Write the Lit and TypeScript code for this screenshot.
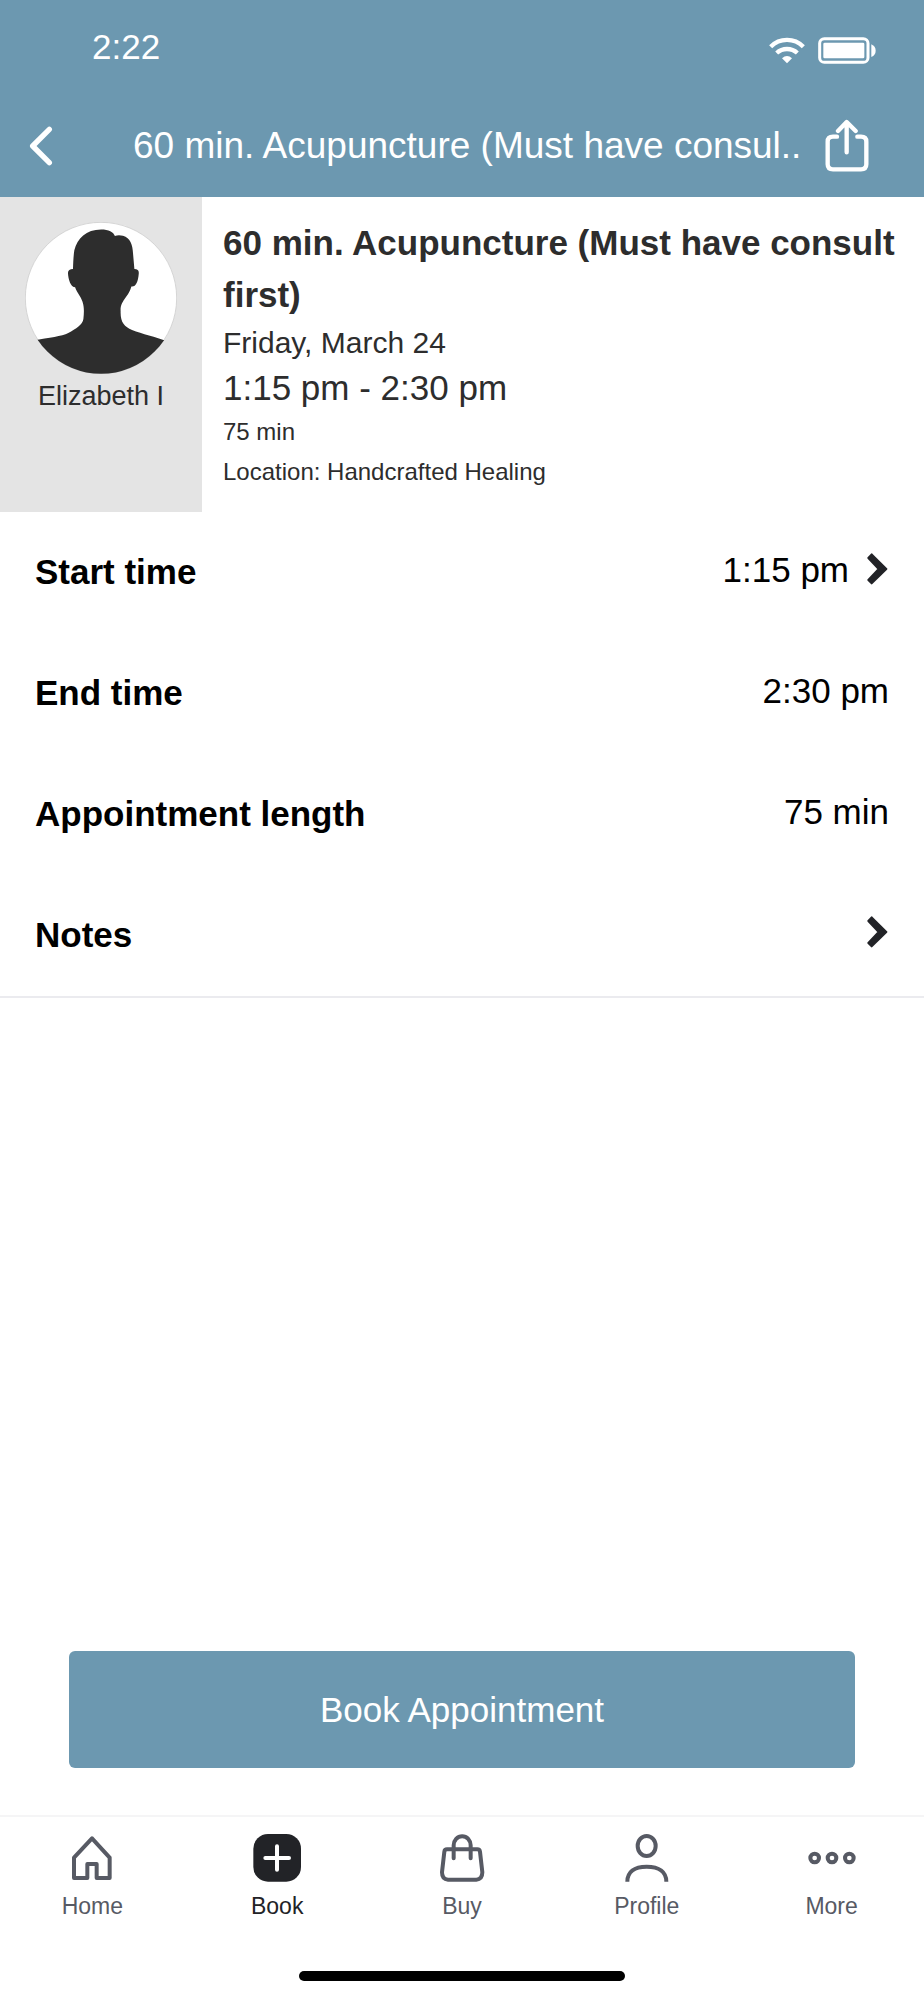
import { LitElement, html, css, svg, nothing, type TemplateResult } from "lit";
import { customElement } from "lit/decorators.js";
import { classMap } from "lit/directives/class-map.js";

interface Row {
  label: string;
  value?: string;
  opens?: boolean;
}

interface Tab {
  label: string;
  viewBox: string;
  icon: TemplateResult;
  active?: boolean;
}

const rows: Row[] = [
  { label: "Start time", value: "1:15 pm", opens: true },
  { label: "End time", value: "2:30 pm" },
  { label: "Appointment length", value: "75 min" },
  { label: "Notes", opens: true },
];

const tabs: Tab[] = [
  {
    label: "Home",
    viewBox: "205 100 144 144",
    icon: svg`<path class="line" d="M277 113 L330 171 V232 H291 V190 H263 V232 H223 V171 Z"/>`,
  },
  {
    label: "Book",
    viewBox: "759 100 144 144",
    active: true,
    icon: svg`<rect class="tile" x="760" y="100" width="143" height="143" rx="44"/>
      <path class="plus" d="M831 137 V207 M796 172 H867"/>`,
  },
  {
    label: "Buy",
    viewBox: "113 100 144 144",
    icon: svg`<path class="line" d="M140 146 H231 Q238 146 239 153 L246 215 Q246 236 228 237 H143 Q125 236 125 215 L132 153 Q133 146 140 146 Z"/>
      <path class="line" d="M160 173 V134 A25 27 0 0 1 211 134 V173"/>`,
  },
  {
    label: "Profile",
    viewBox: "667 100 144 144",
    icon: svg`<ellipse class="line" cx="738" cy="136" rx="27" ry="30"/>
      <path class="line butt" d="M680 243 C680 215 700 198 738 198 S797 215 797 243"/>`,
  },
  {
    label: "More",
    viewBox: "1220 100 144 144",
    icon: svg`<circle class="line" cx="1240" cy="172" r="13"/>
      <circle class="line" cx="1292" cy="172" r="13"/>
      <circle class="line" cx="1344" cy="172" r="13"/>`,
  },
];

@customElement("app-header")
class AppHeader extends LitElement {
  static styles = css`
    :host {
      display: block;
      background: #6c98b0;
      color: #fff;
    }
    .status {
      box-sizing: border-box;
      height: 97px;
      padding: 0 48px 3px 92px;
      display: flex;
      align-items: center;
      justify-content: space-between;
      font-size: 35px;
    }
    .signals {
      display: flex;
      gap: 13px;
      padding-top: 7px;
    }
    .bar {
      height: 100px;
      padding: 0 55px 2px 28px;
      box-sizing: border-box;
      display: flex;
      align-items: center;
    }
    .title {
      flex: 1;
      min-width: 0;
      margin: 0;
      padding: 0 12px 0 77px;
      font-size: 37px;
      font-weight: 400;
      line-height: 44px;
      white-space: nowrap;
      overflow: hidden;
    }
    button {
      flex: none;
      padding: 0;
      border: 0;
      background: none;
      color: inherit;
      cursor: pointer;
    }
    svg {
      display: block;
    }
    .stroke {
      fill: none;
      stroke: currentColor;
      stroke-linecap: round;
      stroke-linejoin: round;
    }
    .w8 {
      stroke-width: 9;
    }
    .w12 {
      stroke-width: 13;
    }
    .w16 {
      stroke-width: 16;
    }
    .flat {
      stroke-linecap: butt;
    }
    .solid {
      fill: currentColor;
    }
  `;

  render() {
    return html`
      <div class="status">
        <span>2:22</span>
        <div class="signals">
          <svg width="36" height="27" viewBox="919 111 108 81" aria-hidden="true">
            <path class="stroke w12 flat" d="M924 140 A69 69 0 0 1 1022 140" />
            <path class="stroke w12 flat" d="M942 159 A46 46 0 0 1 1004 159" />
            <path class="solid" d="M958 175 Q973 161 988 175 L973 190 Z" />
          </svg>
          <svg width="58" height="27" viewBox="1067 111 174 81" aria-hidden="true">
            <rect class="stroke w8" x="1072" y="116" width="145" height="71" rx="14" />
            <rect class="solid" x="1083" y="128" width="123" height="47" rx="4" />
            <path class="solid" d="M1227 133 Q1240 139 1240 152 Q1240 165 1227 171 Z" />
          </svg>
        </div>
      </div>
      <div class="bar">
        <button aria-label="Back">
          <svg width="28" height="40" viewBox="84 379 84 120" aria-hidden="true">
            <path class="stroke w16" d="M148 389 L98 439 L148 489" />
          </svg>
        </button>
        <h1 class="title">60 min. Acupuncture (Must have consul..</h1>
        <button aria-label="Share">
          <svg width="44" height="54" viewBox="1090 358 132 162" aria-hidden="true">
            <path class="stroke w12" d="M1126 411 H1114 Q1098 411 1098 426 V494 Q1098 509 1114 509 H1198 Q1214 509 1214 494 V426 Q1214 411 1198 411 H1187" />
            <path class="stroke w12" d="M1155 458 V368 M1129 394 L1155 367 L1182 394" />
          </svg>
        </button>
      </div>
    `;
  }
}

@customElement("appointment-summary")
class AppointmentSummary extends LitElement {
  static styles = css`
    :host {
      display: flex;
      color: #2d2d2d;
    }
    .person {
      box-sizing: border-box;
      flex: none;
      width: 202px;
      padding-top: 25px;
      background: #e4e4e4;
      display: flex;
      flex-direction: column;
      align-items: center;
      gap: 4px;
    }
    .name {
      font-size: 27px;
      line-height: 36px;
    }
    .info {
      flex: 1;
      padding: 20px 21px;
    }
    .info p {
      margin: 0;
    }
    .heading {
      margin: 0;
      font-size: 35px;
      line-height: 52px;
    }
    .date {
      font-size: 30px;
      line-height: 43px;
    }
    .time {
      font-size: 35px;
      line-height: 48px;
    }
    .small {
      font-size: 24px;
      line-height: 40px;
    }
    .disc {
      fill: #fff;
    }
    .figure {
      fill: #2d2d2d;
    }
    .ring {
      fill: none;
      stroke: #c4c4c4;
      stroke-width: 2;
    }
  `;

  render() {
    return html`
      <div class="person">
        <svg width="152" height="152" viewBox="76 96 453 453" aria-hidden="true">
          <clipPath id="round"><circle cx="302.5" cy="322.5" r="226" /></clipPath>
          <circle class="disc" cx="302.5" cy="322.5" r="226" />
          <circle class="ring" cx="302.5" cy="322.5" r="225.5" />
          <path
            class="figure"
            clip-path="url(#round)"
            d="M100 449 C150 441 185 437 205 427 C228 414 248 402 250 385 C254 350 250 335 240 318 C233 306 228 300 225 290 C213 292 205 268 204 248 C204 240 210 236 219 236 C220 215 220 200 223 180 C232 145 258 118 303 118 C325 118 340 125 344 138 C352 134 360 135 368 137 C390 143 397 165 398 190 L402 236 C412 236 416 240 415 250 C413 275 406 290 393 288 C390 300 385 308 378 318 C365 336 360 345 361 362 C360 395 372 408 395 418 C425 430 465 438 500 452 V549 H100 Z"
          />
        </svg>
        <span class="name">Elizabeth I</span>
      </div>
      <div class="info">
        <h2 class="heading">60 min. Acupuncture (Must have consult first)</h2>
        <p class="date">Friday, March 24</p>
        <p class="time">1:15 pm - 2:30 pm</p>
        <p class="small">75 min</p>
        <p class="small">Location: Handcrafted Healing</p>
      </div>
    `;
  }
}

@customElement("detail-list")
class DetailList extends LitElement {
  static styles = css`
    :host {
      display: block;
      color: #000;
      border-bottom: 2px solid #ebebef;
    }
    .row {
      box-sizing: border-box;
      width: 100%;
      height: 121px;
      padding: 0 35px 2px;
      border: 0;
      background: none;
      color: inherit;
      font: inherit;
      font-size: 35px;
      line-height: 40px;
      display: flex;
      align-items: center;
      justify-content: space-between;
    }
    button.row {
      cursor: pointer;
    }
    .label {
      font-weight: 700;
    }
    .value {
      display: flex;
      align-items: center;
      gap: 18px;
      padding-bottom: 4px;
    }
    svg {
      display: block;
      margin-bottom: 2px;
    }
    .chevron {
      fill: #222327;
      stroke: #222327;
      stroke-width: 6;
      stroke-linejoin: round;
    }
  `;

  private content(row: Row) {
    return html`
      <span class="label">${row.label}</span>
      <span class="value">
        ${row.value ?? nothing}
        ${row.opens
          ? html`<svg width="22" height="32" viewBox="678 127 66 96" aria-hidden="true">
              <path class="chevron" d="M692 131 L736 175 L692 218 L682 208 L713 175 L682 142 Z" />
            </svg>`
          : nothing}
      </span>
    `;
  }

  render() {
    return rows.map((row) =>
      row.opens
        ? html`<button class="row">${this.content(row)}</button>`
        : html`<div class="row">${this.content(row)}</div>`
    );
  }
}

@customElement("tab-bar")
class TabBar extends LitElement {
  static styles = css`
    :host {
      display: block;
      border-top: 2px solid #f5f5f6;
    }
    .tabs {
      display: grid;
      grid-template-columns: repeat(5, 1fr);
      padding-top: 17px;
    }
    .tab {
      display: flex;
      flex-direction: column;
      align-items: center;
      gap: 10px;
      color: #575a64;
      font-size: 23px;
      line-height: 28px;
      text-decoration: none;
    }
    .active {
      color: #222327;
    }
    .line {
      fill: none;
      stroke: currentColor;
      stroke-width: 12;
      stroke-linecap: round;
      stroke-linejoin: round;
    }
    .butt {
      stroke-linecap: butt;
    }
    .tile {
      fill: currentColor;
    }
    .plus {
      fill: none;
      stroke: #fff;
      stroke-width: 12;
      stroke-linecap: round;
    }
    .indicator {
      width: 326px;
      height: 10px;
      margin: 51px auto 19px;
      border-radius: 5px;
      background: #000;
    }
  `;

  render() {
    return html`
      <nav class="tabs">
        ${tabs.map(
          (tab) => html`<a class=${classMap({ tab: true, active: !!tab.active })} href="#">
            <svg width="48" height="48" viewBox=${tab.viewBox} aria-hidden="true">${tab.icon}</svg>
            <span>${tab.label}</span>
          </a>`
        )}
      </nav>
      <div class="indicator"></div>
    `;
  }
}

@customElement("app-root")
class AppRoot extends LitElement {
  static styles = css`
    :host {
      display: flex;
      flex-direction: column;
      min-height: 100vh;
      background: #fff;
      font-family: "Liberation Sans", Arial, sans-serif;
    }
    main {
      flex: 1;
      display: flex;
      flex-direction: column;
    }
    .book {
      margin: auto 69px 47px;
      height: 117px;
      border: 0;
      border-radius: 6px;
      background: #6c98b0;
      color: #fff;
      font: inherit;
      font-size: 35px;
      cursor: pointer;
    }
  `;

  render() {
    return html`
      <app-header></app-header>
      <main>
        <appointment-summary></appointment-summary>
        <detail-list></detail-list>
        <button class="book">Book Appointment</button>
      </main>
      <tab-bar></tab-bar>
    `;
  }
}
